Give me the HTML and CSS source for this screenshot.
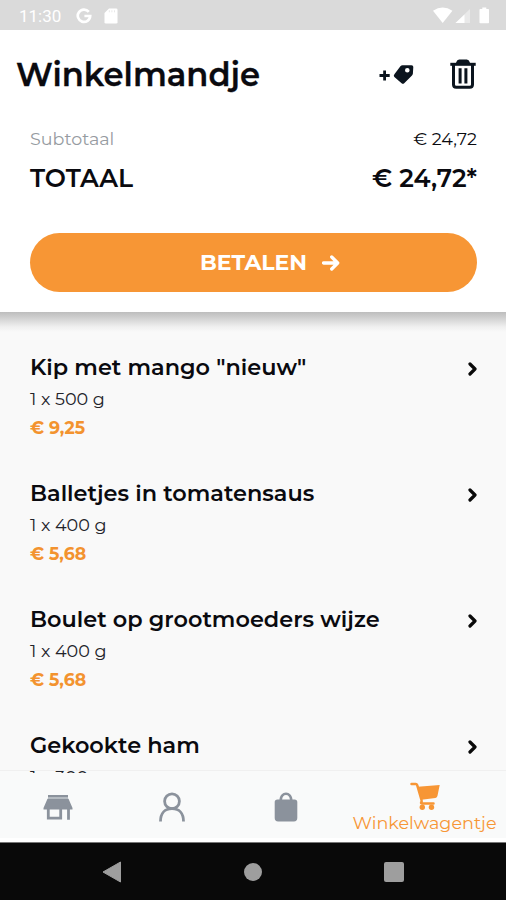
FILE: index.html
```html
<!DOCTYPE html>
<html lang="nl">
<head>
<meta charset="utf-8">
<title>Winkelmandje</title>
<link rel="stylesheet" href="styles.css">
</head>
<body>
<div class="screen">
  <div class="status">
    <span class="clock">11:30</span>
    <svg class="google" width="16" height="16" viewBox="0 0 16 16"><path d="M12.8 3.8A6.2 6.2 0 1 0 14.2 8H8.4" fill="none" stroke="#fff" stroke-width="2.7"/></svg>
    <svg class="sd" width="14" height="16" viewBox="0 0 14 16"><path d="M5 .5h7.2q1.3 0 1.3 1.3v12.4q0 1.3-1.3 1.3H1.8q-1.3 0-1.3-1.3V5z" fill="#fff"/><path d="M5.3 2.3v2M7.9 2.3v2M10.5 2.3v2" stroke="#e8e8e8" stroke-width="1"/></svg>
    <svg class="signals" width="57" height="18" viewBox="0 0 57 18"><path d="M0 3.7q9.700-6.200 19.400 0L9.700 16z" fill="#fff"/><path d="M37 2v14H22.500z" fill="#e9e9e9"/><path d="M31.500 7.500V16h-9z" fill="#fff"/><path d="M47.300 2h2V.5h4V2h2q.7 0 .7.700v12.800q0 .8-.7.800h-8q-.8 0-.8-.8V2.700q0-.7.8-.7z" fill="#fff"/></svg>
  </div>

  <header class="summary">
    <div class="bar">
      <h1>Winkelmandje</h1>
      <svg class="tag" width="36" height="22" viewBox="0 0 36 22"><path d="M1.500 11.500h10.200M6.600 6.400v10.200" stroke="#0b141e" stroke-width="2.800" fill="none"/><path d="M24.500 1.300 33.500 1.200Q35.400 1.200 35.300 3L34.900 9.600Q34.800 10.700 34 11.500L26.200 19.200Q24.900 20.400 23.600 19.200L16.400 13Q15.100 11.700 16.400 10.300L22.400 2.300Q23.300 1.300 24.500 1.300ZM29.300 3.900A2.300 2.300 0 1 0 29.300 8.500A2.300 2.300 0 1 0 29.300 3.900Z" fill="#0b141e" fill-rule="evenodd"/></svg>
      <svg class="trash" width="26" height="30" viewBox="0 0 26 30"><path d="M.3 5.300h25.400" stroke="#0b141e" stroke-width="3" fill="none"/><path d="M6.200 5V3.300Q7 .6 9.200.6h7.600q2.200 0 3 2.700V5z" fill="#0b141e"/><path d="M3.500 5.500v20q0 2.700 2.700 2.700h13.600q2.700 0 2.700-2.700v-20" stroke="#0b141e" stroke-width="3" fill="none"/><path d="M10.100 9.300v15.200M15.900 9.300v15.200" stroke="#0b141e" stroke-width="3" fill="none"/></svg>
    </div>
    <div class="line subtotal"><span class="label">Subtotaal</span><span>€ 24,72</span></div>
    <div class="line total"><span>TOTAAL</span><span>€ 24,72*</span></div>
    <button class="pay">BETALEN<svg width="18" height="16" viewBox="0 0 18 16"><path d="M1.500 8h14M9.700 2l6 6-6 6" fill="none" stroke="#fff" stroke-width="3.300" stroke-linecap="round" stroke-linejoin="round"/></svg></button>
  </header>

  <main class="list">
    <article class="item">
      <div><h2>Kip met mango "nieuw"</h2><p>1 x 500 g</p><strong>€ 9,25</strong></div>
      <svg class="chevron" width="10" height="14" viewBox="0 0 10 14"><path d="M2 2l5 5-5 5" /></svg>
    </article>
    <article class="item">
      <div><h2>Balletjes in tomatensaus</h2><p>1 x 400 g</p><strong>€ 5,68</strong></div>
      <svg class="chevron" width="10" height="14" viewBox="0 0 10 14"><path d="M2 2l5 5-5 5" /></svg>
    </article>
    <article class="item">
      <div><h2>Boulet op grootmoeders wijze</h2><p>1 x 400 g</p><strong>€ 5,68</strong></div>
      <svg class="chevron" width="10" height="14" viewBox="0 0 10 14"><path d="M2 2l5 5-5 5" /></svg>
    </article>
    <article class="item">
      <div><h2>Gekookte ham</h2><p>1 x 300 g</p></div>
      <svg class="chevron" width="10" height="14" viewBox="0 0 10 14"><path d="M2 2l5 5-5 5" /></svg>
    </article>
  </main>

  <nav class="tabs">
    <div class="tab">
      <svg width="30" height="26" viewBox="0 0 30 26"><path d="M5 3h20v2H5z" fill="#c3c8ce"/><path d="M5 1h20v2.200H5zM4.500 4.700h21L29.500 14v1.500H.5V14z" fill="#8b929c"/><path d="M5.300 15v9.200h12.400V15M25.500 15v10.800" fill="none" stroke="#8b929c" stroke-width="2.800"/></svg>
    </div>
    <div class="tab">
      <svg width="28" height="30" viewBox="0 0 28 30"><circle cx="14" cy="9.300" r="7.400" fill="none" stroke="#8b929c" stroke-width="2.800"/><path d="M2.500 29.500C2.500 21 7 16.700 14 16.700S25.500 21 25.500 29.500" fill="none" stroke="#8b929c" stroke-width="2.800"/></svg>
    </div>
    <div class="tab">
      <svg width="26" height="32" viewBox="0 0 26 32"><path d="M4.500 8.500h2C6.800 4.500 9.500 1.500 13 1.500s6.200 3 6.500 7h2q2.800 0 2.800 2.600v16q0 3.400-3.400 3.400H5.100q-3.400 0-3.400-3.400v-16q0-2.600 2.800-2.600zm4.600 0h7.800C16.500 5.600 15.300 4 13 4S9.500 5.600 9.100 8.500z" fill="#8b929c" fill-rule="evenodd"/></svg>
    </div>
    <div class="tab active">
      <svg width="30" height="28" viewBox="0 0 30 28"><path d="M1.500 2h4.200q1.100 0 1.500 1.200L11.500 18q.5 1.600-.3 2.300-.6 1.200 1 1.200h11.300" fill="none" stroke="#f79635" stroke-width="2.500" stroke-linecap="round"/><path d="M7.800 4.700 29.700 2.900 27.500 13.700q-.3 1.800-2.100 2.200L11.500 17.800z" fill="#f79635"/><circle cx="12.300" cy="25.200" r="2.700" fill="#f79635"/><circle cx="21.500" cy="25.200" r="2.700" fill="#f79635"/></svg>
      <span>Winkelwagentje</span>
    </div>
  </nav>

  <footer class="system">
    <svg width="20" height="22" viewBox="0 0 20 22"><path d="M18.500 1v20L1 11z" fill="#9e9e9e" stroke="#9e9e9e" stroke-linejoin="round"/></svg>
    <span class="home"></span>
    <span class="recent"></span>
  </footer>
</div>
</body>
</html>
```
FILE: styles.css
```css
* { box-sizing: border-box; margin: 0; padding: 0; }

body {
  width: 506px;
  height: 900px;
  overflow: hidden;
  font-family: Montserrat, Inter, "Liberation Sans", sans-serif;
  color: #0a0a0f;
  background: #fff;
}

svg { display: block; flex: none; }

.screen { display: flex; flex-direction: column; height: 900px; }

.status {
  display: flex;
  align-items: center;
  height: 30px;
  padding: 2px 16px 0 19px;
  background: #dadada;
}
.clock { width: 57px; font: 17px/28px Roboto, sans-serif; color: #fff; }
.sd { margin-left: 12px; }
.signals { margin-left: auto; margin-top: -1px; }

.summary { height: 282px; padding: 0 29px 0 30px; background: #fff; }
.bar { display: flex; align-items: center; height: 90px; margin: 0 0 8px -14px; }
h1 { flex: 1; font-size: 32.2px; font-weight: 600; line-height: 40px; -webkit-text-stroke: .3px; }
.tag { margin-right: 36px; }
.trash { margin: -3px 1px 0 0; }

.line { display: flex; justify-content: space-between; }
.label { color: #969ba1; }
.subtotal { font-size: 17.5px; line-height: 22px; }
.total { margin-top: 11px; font-size: 25.1px; line-height: 34px; font-weight: 600; }

.pay {
  display: flex;
  align-items: center;
  gap: 15px;
  width: 447px;
  height: 59px;
  margin-top: 38px;
  padding: 1px 0 0 170px;
  border: 0;
  border-radius: 30px;
  background: #f79635;
  color: #fff;
  font: 700 22px/30px Montserrat, Inter, sans-serif;
}

.list {
  position: relative;
  z-index: 1;
  height: 458px;
  flex: none;
  overflow: clip;
  overflow-clip-margin: 3px;
  padding: 40px 28px 0 30px;
  background: linear-gradient(#bdbdbd, #d4d4d4 7px, #f0f0f0 15px, #f9f9f9 20px);
}
.item { display: flex; justify-content: space-between; height: 126px; }
.item h2 { font-size: 22.4px; line-height: 31px; font-weight: 600; white-space: nowrap; }
.item p { font-size: 17.6px; line-height: 32px; color: #22232a; }
.item strong { display: block; font-size: 17.4px; line-height: 25px; font-weight: 700; color: #f3932f; }
.chevron { margin-top: 10px; }
.chevron path { fill: none; stroke: #0a0a0a; stroke-width: 3.2; stroke-linecap: round; stroke-linejoin: round; }

.tabs {
  display: grid;
  grid-template-columns: 115px 114px 114px 163px;
  height: 72px;
  background: #f9fafa;
  border-top: 1px solid #f0f0f0;
  border-bottom: 4px solid #fff;
}
.tab { display: flex; flex-direction: column; align-items: center; justify-content: center; padding-top: 5px; }
.tab.active { justify-content: flex-start; padding-top: 11px; color: #f79635; }
.tab.active span { margin-top: 2px; font-size: 17.6px; line-height: 22px; }

.system {
  display: flex;
  align-items: center;
  justify-content: space-between;
  height: 58px;
  padding: 0 102px;
  background: #090909;
  border-top: 1px solid #777;
}
.home { width: 18px; height: 18px; border-radius: 50%; background: #9e9e9e; }
.recent { width: 20px; height: 20px; border-radius: 2px; background: #9e9e9e; }
```
